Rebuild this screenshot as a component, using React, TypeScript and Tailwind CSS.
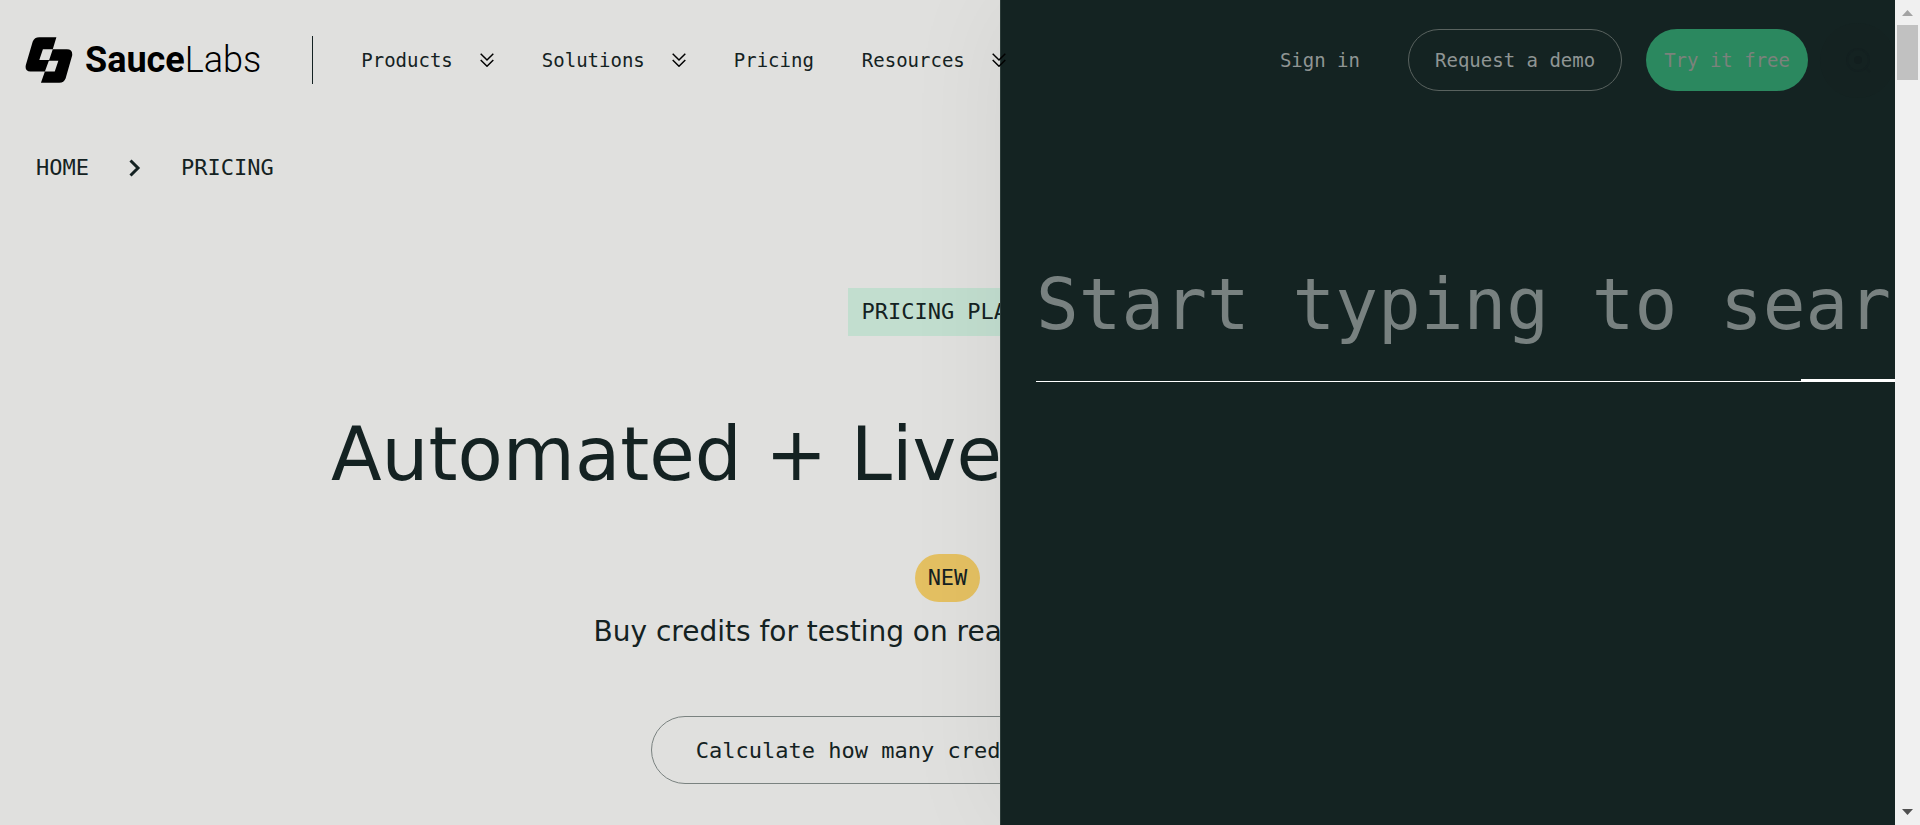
import React from "react";

const mono = "font-['DejaVu_Sans_Mono',monospace]";
const sans = "font-['DejaVu_Sans',sans-serif]";

function LogoMark() {
  return (
    <svg viewBox="16 32 145 140" className="h-[46px] w-12 shrink-0" aria-hidden="true">
      <path
        fillRule="evenodd"
        d="M111 33H59Q44 33 39 46L18 117Q14 137 32 137H76L64 171H120Q134 171 139 158L159 88Q161 69 143 69H100ZM70 69H100L89 102H59ZM88 104H117L106 137H76Z"
      />
    </svg>
  );
}

function DoubleChevron() {
  return (
    <svg
      viewBox="0 0 14 14"
      className="size-[14px] shrink-0"
      fill="none"
      stroke="#000"
      strokeWidth="1.5"
      aria-hidden="true"
    >
      <path d="M.7.8 7 7 13.300 .8M.7 7 7 13.200 13.300 7" />
    </svg>
  );
}

const navItems = [
  { label: "Products", menu: true },
  { label: "Solutions", menu: true },
  { label: "Pricing", menu: false },
  { label: "Resources", menu: true },
];

function Header() {
  return (
    <header className="relative z-20 flex h-[120px] items-center pl-[25px]">
      <a href="#" className="flex items-center gap-3 text-black">
        <LogoMark />
        <span className="font-[Roboto,sans-serif] text-[36px] leading-10">
          <b className="font-bold">Sauce</b>
          <span className="font-light">Labs</span>
        </span>
      </a>
      <div className="ml-[51px] h-12 w-px bg-[#142222]" />
      <nav className="ml-12 flex items-center gap-12">
        {navItems.map((item) =>
          item.menu ? (
            <button key={item.label} type="button" className="flex items-center gap-[27px]">
              <span>{item.label}</span>
              <DoubleChevron />
            </button>
          ) : (
            <a key={item.label} href="#">
              {item.label}
            </a>
          ),
        )}
      </nav>
      <div className="ml-auto flex items-center whitespace-nowrap text-[#8f9594]">
        <a href="#" className="mr-12">
          Sign in
        </a>
        <a
          href="#"
          className="mr-6 flex h-[62px] items-center rounded-[31px] border border-[#59625f] px-[26px]"
        >
          Request a demo
        </a>
        <a
          href="#"
          className="mr-3 flex h-[62px] items-center rounded-[31px] bg-[#2b885f] px-[18px] text-[#7b827c]"
        >
          Try it free
        </a>
        <button
          type="button"
          aria-label="Search"
          className="flex size-[75px] items-center justify-center rounded-full bg-[#142221]"
        >
          <svg viewBox="0 0 30 30" className="size-[30px]" aria-hidden="true">
            <g fill="none" stroke="#132020" strokeWidth="2">
              <circle cx="15" cy="15" r="11" />
              <path d="m23 23 4 4" />
            </g>
            <circle cx="15" cy="15" r="4" fill="#121e1e" />
          </svg>
        </button>
      </div>
    </header>
  );
}

function SearchPanel() {
  return (
    <aside className="absolute inset-y-0 right-0 z-10 w-[895px] overflow-hidden border-l border-[#2b3a38] bg-[#142322] pl-[35px] shadow-[0_0_100px_rgba(0,0,0,0.06)]">
      <form className="mt-[256px] flex h-[126px] w-[1100px] items-start border-b border-white">
        <input
          type="search"
          aria-label="Search"
          placeholder="Start typing to search"
          className="h-[98px] min-w-0 grow bg-transparent text-[71px] text-white outline-none placeholder:text-[#788180] placeholder:opacity-100"
        />
      </form>
      <div className="-mt-[3px] ml-[765px] h-[3px] bg-white" />
    </aside>
  );
}

function Scrollbar() {
  return (
    <div className="flex w-[25px] shrink-0 flex-col items-center bg-[#f0f0f0]" aria-hidden="true">
      <svg viewBox="0 0 25 25" className="size-[25px]">
        <path d="M7 16h11l-5.500-6z" fill="#a3a3a3" />
      </svg>
      <div className="h-[55px] w-[21px] bg-[#c1c1c1]" />
      <svg viewBox="0 0 25 25" className="mt-auto size-[25px]">
        <path d="M7 9h11l-5.500 6z" fill="#505050" />
      </svg>
    </div>
  );
}

export default function App() {
  return (
    <div className={`flex min-h-screen bg-[#e0e0de] text-[19px] text-[#142222] ${mono}`}>
      <div className="relative min-w-0 flex-1 overflow-hidden">
        <Header />
        <nav
          aria-label="Breadcrumb"
          className="flex h-24 items-center gap-10 pl-9 text-[22px] leading-8"
        >
          <a href="#">HOME</a>
          <svg
            viewBox="0 0 12 18"
            className="h-[18px] w-3"
            fill="none"
            stroke="#142222"
            strokeWidth="3"
            aria-hidden="true"
          >
            <path d="m1.500 1.500 7.500 7.500-7.500 7.500" />
          </svg>
          <a href="#">PRICING</a>
        </nav>
        <main className="mt-[72px] flex flex-col items-center whitespace-nowrap">
          <p className="bg-[#c2decf] px-[13px] text-[22px] leading-[48px]">PRICING PLANS</p>
          <h1 className={`mt-[70px] w-full max-w-[1233px] text-[74px] leading-[96px] ${sans}`}>
            Automated + Live Device Cloud
          </h1>
          <span className="mt-[52px] rounded-full bg-[#e4c062] px-[13px] text-[22px] leading-[48px]">
            NEW
          </span>
          <p className={`mt-[10px] w-full max-w-[708px] text-[28px] leading-10 ${sans}`}>
            Buy credits for testing on real and virtual devices
          </p>
          <a
            href="#"
            className="mt-16 flex h-[68px] items-center rounded-full border border-[#7a8280] px-11 text-[22px]"
          >
            Calculate how many credits you'll need
          </a>
        </main>
        <SearchPanel />
      </div>
      <Scrollbar />
    </div>
  );
}
